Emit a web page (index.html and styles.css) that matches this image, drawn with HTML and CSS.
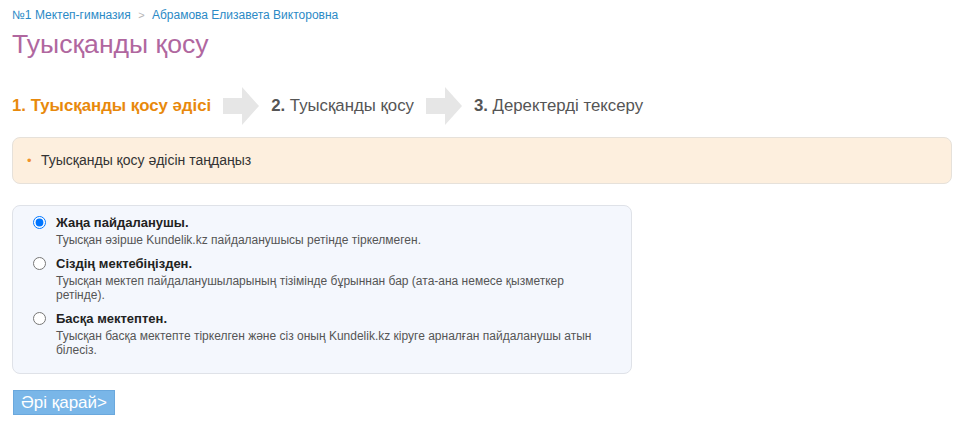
FILE: index.html
```html
<!DOCTYPE html>
<html lang="kk">
<head>
<meta charset="utf-8">
<title>Туысқанды қосу</title>
<link rel="stylesheet" href="styles.css">
</head>
<body>
<div class="page">
  <nav class="crumbs">
    <a href="#">№1 Мектеп-гимназия</a>
    <span class="sep">&gt;</span>
    <a href="#">Абрамова Елизавета Викторовна</a>
  </nav>
  <h1 class="title">Туысқанды қосу</h1>

  <div class="steps">
    <div class="step active"><b>1.</b> Туысқанды қосу әдісі</div>
    <svg class="arrow" width="36" height="38" viewBox="0 0 36 38"><path d="M0 11H19V0L36 19L19 38V27H0Z" fill="#e6e6e6"/></svg>
    <div class="step"><b>2.</b> Туысқанды қосу</div>
    <svg class="arrow" width="36" height="38" viewBox="0 0 36 38"><path d="M0 11H19V0L36 19L19 38V27H0Z" fill="#e6e6e6"/></svg>
    <div class="step"><b>3.</b> Деректерді тексеру</div>
  </div>

  <div class="notice">
    <span class="dot">•</span>
    <span>Туысқанды қосу әдісін таңдаңыз</span>
  </div>

  <form class="options">
    <label class="opt">
      <input type="radio" name="m" checked>
      <span class="opt-body">
        <span class="opt-title">Жаңа пайдаланушы.</span>
        <span class="opt-desc">Туысқан әзірше Kundelik.kz пайдаланушысы ретінде тіркелмеген.</span>
      </span>
    </label>
    <label class="opt">
      <input type="radio" name="m">
      <span class="opt-body">
        <span class="opt-title">Сіздің мектебіңізден.</span>
        <span class="opt-desc">Туысқан мектеп пайдаланушыларының тізімінде бұрыннан бар (ата-ана немесе қызметкер ретінде).</span>
      </span>
    </label>
    <label class="opt">
      <input type="radio" name="m">
      <span class="opt-body">
        <span class="opt-title">Басқа мектептен.</span>
        <span class="opt-desc">Туысқан басқа мектепте тіркелген және сіз оның Kundelik.kz кіруге арналған пайдаланушы атын білесіз.</span>
      </span>
    </label>
  </form>

  <button class="next" type="button">Әрі қарай&gt;</button>
</div>
</body>
</html>
```

FILE: styles.css
```css
html, body {
  margin: 0;
  padding: 0;
  background: #ffffff;
}
body {
  font-family: "Liberation Sans", Arial, sans-serif;
  color: #333333;
}
.page {
  padding: 8px 12px 0 12px;
}
.crumbs {
  font-size: 12px;
  line-height: 14px;
}
.crumbs a {
  color: #2b8ac6;
  text-decoration: none;
}
.crumbs .sep {
  color: #b5b5b5;
  font-size: 11px;
  margin: 0 4px;
}
.title {
  margin: 6px 0 0 0;
  font-size: 26.6px;
  line-height: 32px;
  font-weight: normal;
  color: #b0679f;
}
.steps {
  margin-top: 27px;
  display: flex;
  align-items: center;
  height: 38px;
}
.step {
  font-size: 16.8px;
  color: #555555;
  white-space: nowrap;
}
.step b {
  font-weight: bold;
}
.step.active {
  color: #e8890c;
  font-weight: bold;
}
.arrow {
  display: block;
  margin: 0 12px;
  flex: none;
}
.notice {
  margin-top: 12px;
  background: #fdefde;
  border: 1px solid #e6e1da;
  border-radius: 8px;
  padding: 14px 14px;
  font-size: 14px;
  line-height: 17px;
  display: flex;
  align-items: center;
}
.notice .dot {
  color: #f0922b;
  width: 14px;
  margin-right: 0;
  font-size: 13px;
}
.options {
  margin-top: 21px;
  width: 618px;
  background: #f4f7fd;
  border: 1px solid #dfe2e8;
  border-radius: 8px;
  padding: 9px 0 16px 0;
  display: flex;
  flex-direction: column;
  gap: 9px;
}
.opt {
  display: flex;
  align-items: flex-start;
  padding-left: 20px;
  padding-right: 28px;
}
.opt input {
  margin: 1px 10px 0 0;
  width: 13px;
  height: 13px;
  flex: none;
}
.opt-body {
  display: flex;
  flex-direction: column;
}
.opt-title {
  font-weight: bold;
  font-size: 13px;
  line-height: 16px;
  color: #222222;
}
.opt-desc {
  margin-top: 2px;
  font-size: 12px;
  line-height: 14px;
  color: #555555;
}
.next {
  margin-top: 16px;
  margin-left: 1px;
  height: 25px;
  padding: 0 7px;
  background: #79b6e8;
  border: 1px solid #6aa8dd;
  color: #ffffff;
  font-family: "Liberation Sans", Arial, sans-serif;
  font-size: 17px;
  line-height: 23px;
  cursor: pointer;
}
```
